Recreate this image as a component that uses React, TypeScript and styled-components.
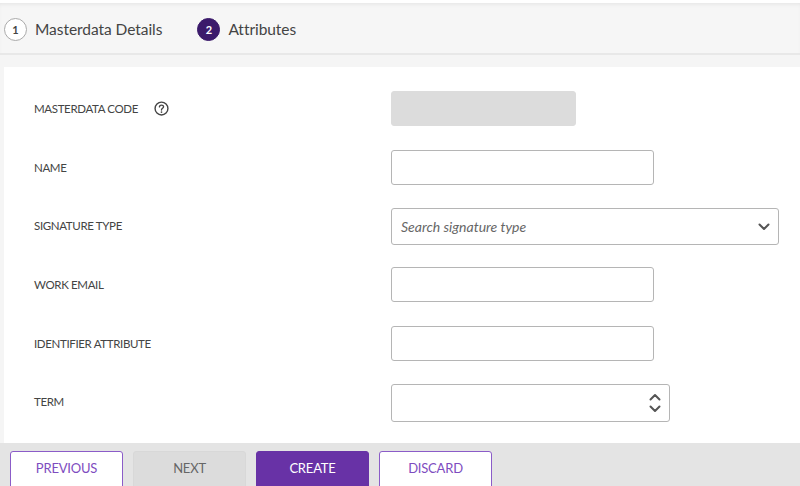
import React from 'react';
import { styled, createGlobalStyle } from 'styled-components';

const GlobalStyle = createGlobalStyle`
    html, body {
        margin: 0;
        padding: 0;
        background: #f5f5f5;
        font-family: Lato, "Liberation Sans", sans-serif;
        color: #333;
    }
    * { box-sizing: border-box; }
`

type FieldKind = 'disabled' | 'text' | 'select' | 'number';

type FieldType = {
    label: string,
    kind: FieldKind,
    help?: boolean,
    placeholder?: string
}

const fields: FieldType[] = [
    { label: 'MASTERDATA CODE', kind: 'disabled', help: true },
    { label: 'NAME', kind: 'text' },
    { label: 'SIGNATURE TYPE', kind: 'select', placeholder: 'Search signature type' },
    { label: 'WORK EMAIL', kind: 'text' },
    { label: 'IDENTIFIER ATTRIBUTE', kind: 'text' },
    { label: 'TERM', kind: 'number' },
];

const HelpIcon = () => (
    <svg width="15" height="15" viewBox="0 0 14 14">
        <circle cx="7" cy="7" r="6" fill="none" stroke="#444" strokeWidth="1.3" />
        <path d="M5.1 5.5 C5.1 3.3 8.9 3.3 8.9 5.4 C8.9 6.8 7 6.8 7 8.4" fill="none" stroke="#444" strokeWidth="1.3" strokeLinecap="round" />
        <circle cx="7" cy="10.3" r="0.8" fill="#444" />
    </svg>
);

const Chevron = ({ up }: { up?: boolean }) => (
    <svg width="12" height="8" viewBox="0 0 12 8">
        <path d={up ? "M1.5 6.5 L6 2 L10.5 6.5" : "M1.5 1.5 L6 6 L10.5 1.5"} fill="none" stroke="#555" strokeWidth="2" strokeLinecap="round" strokeLinejoin="round" />
    </svg>
);

const renderControl = (f: FieldType) => {
    switch (f.kind) {
        case 'disabled':
            return <DisabledBox />;
        case 'select':
            return (
                <SelectBox>
                    <Placeholder>{f.placeholder}</Placeholder>
                    <Chevron />
                </SelectBox>
            );
        case 'number':
            return (
                <NumberBox>
                    <Spinner>
                        <Chevron up />
                        <Chevron />
                    </Spinner>
                </NumberBox>
            );
        default:
            return <TextBox />;
    }
};

const App: React.FC = () => {
    return (
        <Page>
            <GlobalStyle />
            <Stepper>
                <Step>
                    <StepNumber $active={false}>1</StepNumber>
                    <StepLabel>Masterdata Details</StepLabel>
                </Step>
                <Step>
                    <StepNumber $active={true}>2</StepNumber>
                    <StepLabel>Attributes</StepLabel>
                </Step>
            </Stepper>
            <Card>
                {fields.map((f) => (
                    <Row key={f.label}>
                        <Label>
                            {f.label}
                            {f.help && <HelpIcon />}
                        </Label>
                        {renderControl(f)}
                    </Row>
                ))}
            </Card>
            <Footer>
                <Button $variant="outline">PREVIOUS</Button>
                <Button $variant="disabled">NEXT</Button>
                <Button $variant="primary">CREATE</Button>
                <Button $variant="outline">DISCARD</Button>
            </Footer>
        </Page>
    );
};

export default App;

const Page = styled.div`
    width: 800px;
    height: 486px;
    overflow: hidden;
    background: #f5f5f5;
    display: flex;
    flex-direction: column;
    border-top: 3px solid #fff;
`
const Stepper = styled.div`
    height: 52px;
    flex-shrink: 0;
    display: flex;
    align-items: center;
    gap: 35px;
    padding: 2px 0 0 4px;
    background: #f6f6f6;
    border-bottom: 2px solid #e8e8e8;
    box-shadow: inset 0 3px 4px -2px rgba(0, 0, 0, 0.08);
`
const Step = styled.div`
    display: flex;
    align-items: center;
    gap: 8px;
`
const StepNumber = styled.span<{ $active: boolean }>`
    width: 23px;
    height: 23px;
    border-radius: 50%;
    display: flex;
    align-items: center;
    justify-content: center;
    font-size: 11px;
    font-weight: 700;
    color: ${({ $active }) => $active ? '#fff' : '#444'};
    background: ${({ $active }) => $active ? '#3b1a6b' : '#fff'};
    border: 1px solid ${({ $active }) => $active ? '#3b1a6b' : '#aaa'};
`
const StepLabel = styled.span`
    font-size: 15.5px;
    color: #444;
    letter-spacing: -0.05px;
`
const Card = styled.div`
    margin: 12px 0 0 4px;
    background: #fff;
    padding: 24px 0 0 30px;
    height: 376px;
    flex-shrink: 0;
    display: flex;
    flex-direction: column;
`
const Row = styled.div`
    height: 59px;
    display: flex;
    align-items: flex-start;
`
const Label = styled.div`
    width: 357px;
    height: 35px;
    display: flex;
    align-items: center;
    gap: 16px;
    font-size: 11.5px;
    color: #444;
    letter-spacing: -0.35px;
`
const inputBase = `
    height: 35px;
    border: 1px solid #b5b5b5;
    border-radius: 3px;
    background: #fff;
`
const DisabledBox = styled.div`
    ${inputBase}
    width: 185px;
    background: #dcdcdc;
    border-color: #dcdcdc;
`
const TextBox = styled.div`
    ${inputBase}
    width: 263px;
`
const SelectBox = styled.div`
    ${inputBase}
    width: 388px;
    height: 37px;
    display: flex;
    align-items: center;
    justify-content: space-between;
    padding: 0 8px 0 9px;
`
const Placeholder = styled.span`
    font-size: 14px;
    font-style: italic;
    color: #666;
`
const NumberBox = styled.div`
    ${inputBase}
    width: 279px;
    height: 38px;
    display: flex;
    justify-content: flex-end;
    align-items: center;
    padding-right: 8px;
`
const Spinner = styled.div`
    display: flex;
    flex-direction: column;
    gap: 4px;
`
const Footer = styled.div`
    flex: 1;
    background: #e4e4e4;
    display: flex;
    gap: 10px;
    padding: 8px 0 0 10px;
`
const Button = styled.button<{ $variant: 'outline' | 'disabled' | 'primary' }>`
    width: 113px;
    height: 42px;
    padding: 0 0 8px;
    border-radius: 3px;
    font-family: inherit;
    font-size: 13px;
    letter-spacing: -0.2px;
    border: 1px solid ${({ $variant }) => $variant === 'outline' ? '#8b5cc8' : $variant === 'primary' ? '#6832a6' : '#d8d8d8'};
    background: ${({ $variant }) => $variant === 'outline' ? '#fff' : $variant === 'primary' ? '#6832a6' : '#dcdcdc'};
    color: ${({ $variant }) => $variant === 'outline' ? '#7e4cc0' : $variant === 'primary' ? '#fff' : '#666'};
`
